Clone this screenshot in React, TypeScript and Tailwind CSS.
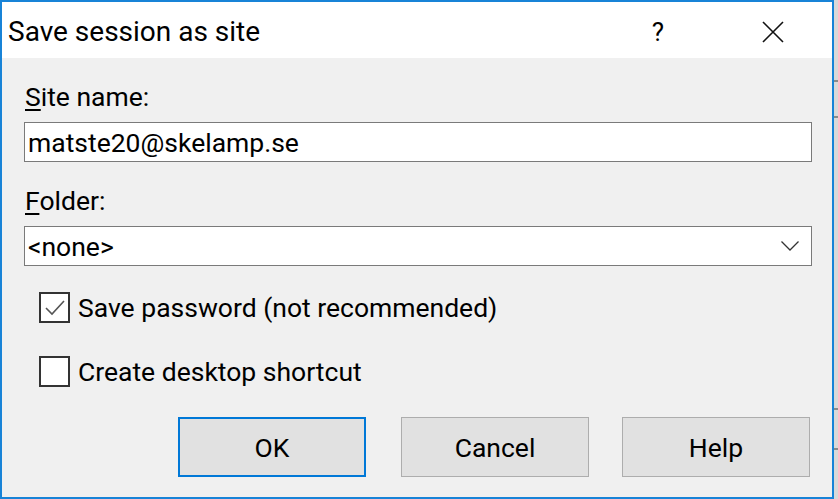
export default function App() {
    return (
        <div className="flex h-[499px] w-[838px] bg-[#d9d9d9] font-['Roboto',sans-serif] text-black">
            {/* Dialog */}
            <div className="flex h-full w-[834px] flex-col border-2 border-[#1883d7] bg-[#f0f0f0]">
                {/* Title bar */}
                <div className="flex h-[56px] items-center bg-white pl-[6px] pt-[4px]">
                    <span className="flex-1 text-[28px] leading-none">Save session as site</span>
                    <span className="w-[30px] text-center text-[26px] leading-none">?</span>
                    <div className="ml-[86px] mr-[45px] flex w-[28px] items-center justify-center">
                        <svg width="22" height="22" viewBox="0 0 22 22">
                            <path d="M1 1 L21 21 M21 1 L1 21" stroke="#111" strokeWidth="1.6" fill="none" />
                        </svg>
                    </div>
                </div>
                {/* Body */}
                <div className="flex flex-1 flex-col px-[22px] pt-[25px] text-[26.5px] leading-[27px]">
                    <label className="pl-[1px]"><u className="underline-offset-[3px]">S</u>ite name:</label>
                    <div className="mt-[12px] flex h-[40px] w-[788px] items-center border border-[#7a7a7a] bg-white pl-[3px]">
                        matste20@skelamp.se
                    </div>
                    <label className="mt-[25px] pl-[1px]"><u className="underline-offset-[3px]">F</u>older:</label>
                    <div className="mt-[12px] flex h-[40px] w-[788px] items-center border border-[#7a7a7a] bg-white pl-[3px]">
                        <span className="flex-1">&lt;none&gt;</span>
                        <svg className="mr-[12px]" width="18" height="10" viewBox="0 0 18 10">
                            <path d="M0.5 0.5 L9 9 L17.5 0.5" stroke="#333" strokeWidth="1.3" fill="none" />
                        </svg>
                    </div>
                    <div className="mt-[26px] flex flex-col gap-[33px] pl-[15px]">
                        <div className="flex items-center gap-[8px]">
                            <div className="flex h-[31px] w-[31px] items-center justify-center border-2 border-[#333] bg-white">
                                <svg width="22" height="18" viewBox="0 0 22 18">
                                    <path d="M2 9 L8 15 L20 2" stroke="#555" strokeWidth="1.6" fill="none" />
                                </svg>
                            </div>
                            <span>Save password (not recommended)</span>
                        </div>
                        <div className="flex items-center gap-[8px]">
                            <div className="h-[31px] w-[31px] border-2 border-[#333] bg-white" />
                            <span>Create desktop shortcut</span>
                        </div>
                    </div>
                    <div className="mt-[30px] flex pl-[154px]">
                        <button className="h-[60px] w-[188px] border-2 border-[#0078d7] bg-[#e1e1e1]">OK</button>
                        <button className="ml-[35px] h-[60px] w-[188px] border border-[#adadad] bg-[#e1e1e1]">Cancel</button>
                        <button className="ml-[33px] h-[60px] w-[188px] border border-[#adadad] bg-[#e1e1e1]">Help</button>
                    </div>
                </div>
            </div>
            {/* Window edge behind */}
            <div className="flex w-[4px] flex-col">
                <div className="h-[80px]" />
                <div className="h-[2px] bg-[#8a8a8a]" />
                <div className="h-[34px]" />
                <div className="h-[2px] bg-[#8a8a8a]" />
                <div className="h-[290px]" />
                <div className="h-[2px] bg-[#8a8a8a]" />
                <div className="h-[38px]" />
                <div className="h-[2px] bg-[#8a8a8a]" />
            </div>
        </div>
    )
}
